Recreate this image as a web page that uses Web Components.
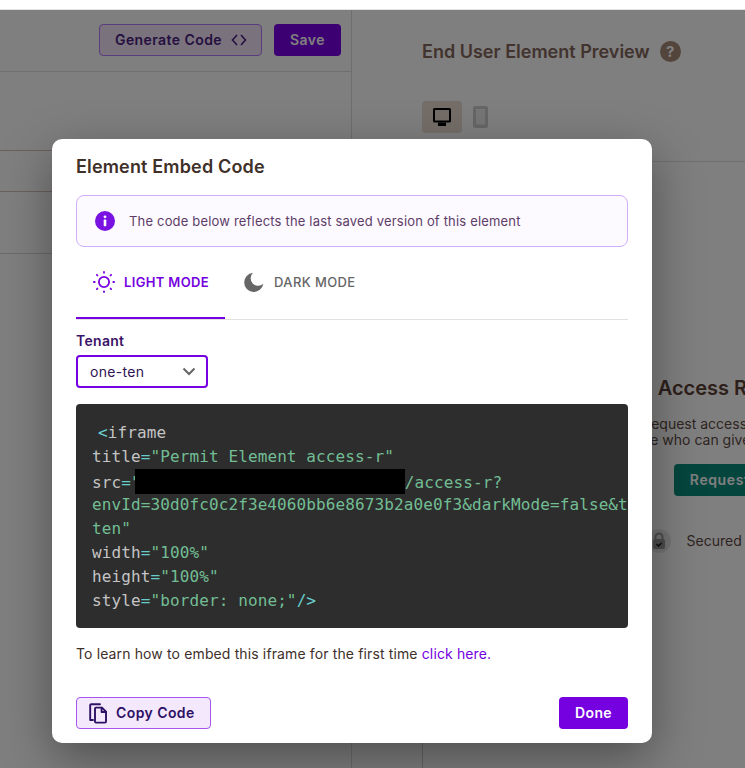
<!DOCTYPE html>
<html>
<head>
<meta charset="utf-8">
<title>Element Embed Code</title>
<style>
  html, body { margin: 0; height: 768px; overflow: hidden; background: #fff; }
  body { font-family: Inter, "Liberation Sans", sans-serif; }
</style>
</head>
<body>
<pm-app>
  <pm-editor-pane slot="left"></pm-editor-pane>
  <pm-preview-pane slot="right"></pm-preview-pane>
  <pm-modal slot="modal" heading="Element Embed Code">
    <pm-alert>The code below reflects the last saved version of this element</pm-alert>
    <pm-tabs></pm-tabs>
    <pm-select label="Tenant" value="one-ten"></pm-select>
    <pm-code></pm-code>
    <pm-note></pm-note>
    <pm-button slot="footer" kind="soft">
      <svg slot="icon" width="22" height="22" viewBox="0 0 22 22" fill="none" stroke="#2e1065" stroke-width="1.9" stroke-linejoin="round" stroke-linecap="round"><path d="M6 18H3.2V3.2a1 1 0 0 1 1-1H13"/><path d="M8 6.6a1 1 0 0 1 1-1h6l4 4v10a1 1 0 0 1-1 1H9a1 1 0 0 1-1-1z"/><path d="M14.6 5.8v4.2H19"/></svg>
      Copy Code
    </pm-button>
    <pm-button slot="footer" kind="primary">Done</pm-button>
  </pm-modal>
</pm-app>

<script>
class PmApp extends HTMLElement {
  constructor() {
    super();
    this.attachShadow({mode: 'open'}).innerHTML = `
      <style>
        :host { display: block; height: 768px; overflow: hidden; }
        .top { height: 10px; box-sizing: border-box; border-bottom: 1px solid #e4e4e4; }
        .stage { position: relative; display: flex; height: 758px; overflow: hidden; background: #fff; }
        .scrim {
          position: absolute;
          inset: 0;
          background: rgba(0, 0, 0, .5);
          padding: 129px 0 0 52px;
        }
      </style>
      <div class="top"></div>
      <div class="stage">
        <slot name="left"></slot>
        <slot name="right"></slot>
        <div class="scrim"><slot name="modal"></slot></div>
      </div>
    `;
  }
}

class PmEditorPane extends HTMLElement {
  constructor() {
    super();
    this.attachShadow({mode: 'open'}).innerHTML = `
      <style>
        :host { display: block; width: 352px; flex: none; box-sizing: border-box; border-right: 1px solid #dcdcdc; }
        .bar {
          display: flex;
          justify-content: flex-end;
          gap: 12px;
          height: 62px;
          box-sizing: border-box;
          padding: 14px 10px 0 0;
          border-bottom: 1px solid #dedede;
        }
        .btn {
          display: flex;
          align-items: center;
          justify-content: center;
          height: 32px;
          box-sizing: border-box;
          padding-bottom: 1px;
          border-radius: 4px;
          font-size: 14px;
          font-weight: 600;
          letter-spacing: .42px;
        }
        .gen { width: 163px; gap: 9px; padding-left: 1px; background: #f4e5fb; border: 1px solid #b67aff; color: #4c1f80; }
        .save { width: 67px; background: #7a00e6; color: #fff; }
        .row { box-sizing: border-box; }
        .r1 { height: 79px; border-bottom: 1px solid #dbbfbc; }
        .r2 { height: 41px; border-bottom: 1px solid #dbbfbc; }
        .r3 { height: 62px; border-bottom: 1px solid #d6d6d6; }
      </style>
      <div class="bar">
        <div class="btn gen">Generate Code
          <svg width="16" height="12" viewBox="0 0 16 12" fill="none" stroke="#4c1f80" stroke-width="1.6"><path d="M6 1 1.5 6 6 11"/><path d="M10 1l4.5 5L10 11"/></svg>
        </div>
        <div class="btn save">Save</div>
      </div>
      <div class="row r1"></div>
      <div class="row r2"></div>
      <div class="row r3"></div>
    `;
  }
}

class PmPreviewPane extends HTMLElement {
  constructor() {
    super();
    this.attachShadow({mode: 'open'}).innerHTML = `
      <style>
        :host { display: block; flex: 1; min-width: 0; box-sizing: border-box; overflow: hidden; padding-left: 70px; }
        .head {
          display: flex;
          align-items: center;
          gap: 10px;
          height: 20px;
          padding-top: 31px;
          font-size: 18px;
          font-weight: 600;
          color: #84665c;
          white-space: nowrap;
        }
        .q {
          display: flex;
          align-items: center;
          justify-content: center;
          width: 21px;
          height: 21px;
          border-radius: 50%;
          background: #a68a76;
          color: #fff;
          font-size: 15px;
          font-weight: 700;
        }
        .devices { display: flex; align-items: center; gap: 11px; padding-top: 40px; height: 32px; }
        .dev { display: flex; align-items: center; justify-content: center; width: 40px; height: 32px; border-radius: 4px; background: #eadcd0; }
        .phone { display: block; }
        .area {
          width: 626px;
          height: 700px;
          margin-top: 28px;
          box-sizing: border-box;
          border-top: 1px solid #dedede;
          border-left: 1px solid #cfcfcf;
          display: flex;
          flex-direction: column;
          align-items: center;
          padding-top: 214px;
          text-align: center;
          color: #5e4a44;
          font-size: 14px;
          line-height: 16px;
          white-space: nowrap;
        }
        h2 { margin: 0 0 16px; font-size: 20px; line-height: 24px; font-weight: 600; color: #5b4036; }
        .go {
          display: flex;
          align-items: center;
          height: 32px;
          padding: 0 16px;
          margin: 16px 0 0 26px;
          border-radius: 4px;
          background: #098c7d;
          color: #fff;
          font-size: 14px;
          font-weight: 600;
          letter-spacing: .6px;
        }
        .sec { display: flex; align-items: center; gap: 16px; margin-top: 33px; }
        .lock { display: flex; align-items: center; justify-content: center; width: 24px; height: 24px; border-radius: 50%; background: #e6e6e6; }
      </style>
      <div class="head">End User Element Preview <span class="q">?</span></div>
      <div class="devices">
        <div class="dev">
          <svg width="20" height="20" viewBox="0 0 20 20"><path fill="#000" fill-rule="evenodd" d="M2.5 1h15A1.5 1.5 0 0 1 19 2.500v11.500a1.500 1.500 0 0 1-1.500 1.500H2.500A1.500 1.500 0 0 1 1 14V2.500A1.500 1.500 0 0 1 2.500 1zM3 3v10.500h14V3z"/><path fill="#000" d="M6 15.500h8V19H6z"/></svg>
        </div>
        <svg class="phone" width="15" height="22" viewBox="0 0 15 22"><rect width="15" height="22" rx="2.500" fill="#cccccc"/><rect x="3" y="3" width="9" height="15.500" fill="#ededed"/></svg>
      </div>
      <div class="area">
        <h2>Access Request</h2>
        <div>Request access to this page</div>
        <div>someone who can give you access to this</div>
        <div class="go">Request Access</div>
        <div class="sec">
          <span class="lock"><svg width="14" height="18" viewBox="0 0 14 18"><path fill="none" stroke="#999" stroke-width="2" d="M3.500 8V5a3.500 3.500 0 0 1 7 0v3"/><rect x="1" y="7" width="12" height="10" rx="2" fill="#999"/><path fill="none" stroke="#111" stroke-width="1.300" d="M4.500 12l2 2 3-3"/></svg></span>
          Secured by Permit.io
        </div>
      </div>
    `;
  }
}

class PmModal extends HTMLElement {
  constructor() {
    super();
    this.attachShadow({mode: 'open'}).innerHTML = `
      <style>
        :host {
          display: block;
          width: 600px;
          height: 604px;
          box-sizing: border-box;
          padding: 14px 24px 14px;
          background: #fff;
          border-radius: 10px;
          box-shadow: 0 16px 50px rgba(0, 0, 0, .38);
        }
        h1 { margin: 0 0 14px; font-size: 18px; line-height: 28px; font-weight: 600; letter-spacing: .16px; color: #40302a; }
        footer { display: flex; justify-content: space-between; margin-top: 33px; }
      </style>
      <h1></h1>
      <slot></slot>
      <footer><slot name="footer"></slot></footer>
    `;
    this.shadowRoot.querySelector('h1').textContent = this.getAttribute('heading');
  }
}

class PmAlert extends HTMLElement {
  constructor() {
    super();
    this.attachShadow({mode: 'open'}).innerHTML = `
      <style>
        :host {
          display: flex;
          align-items: center;
          gap: 14px;
          height: 52px;
          box-sizing: border-box;
          padding: 0 0 1px 18px;
          border: 1px solid #d2aefb;
          border-radius: 8px;
          background: #fcfaff;
          color: #5e3c68;
          font-size: 13px;
          letter-spacing: .18px;
        }
      </style>
      <svg width="20" height="20" viewBox="0 0 20 20"><circle cx="10" cy="10" r="10" fill="#7a12e2"/><circle cx="10" cy="5.800" r="1.400" fill="#fff"/><rect x="8.700" y="8.600" width="2.600" height="6.600" rx=".6" fill="#fff"/></svg>
      <span><slot></slot></span>
    `;
  }
}

class PmTabs extends HTMLElement {
  constructor() {
    super();
    const rays = [0, 45, 90, 135, 180, 225, 270, 315].map(a =>
      `<rect x="10.100" y="0" width="1.800" height="2.600" rx=".9" transform="rotate(${a} 11 11)" fill="#7500e0"/>`).join('');
    this.attachShadow({mode: 'open'}).innerHTML = `
      <style>
        :host {
          display: flex;
          height: 73px;
          box-sizing: border-box;
          border-bottom: 1px solid #e2e0e0;
        }
        .tab {
          display: flex;
          align-items: center;
          height: 72px;
          box-sizing: border-box;
          padding-bottom: 3px;
          font-size: 13px;
          font-weight: 500;
          letter-spacing: .4px;
          color: #666;
        }
        .on {
          width: 149px;
          padding-left: 17px;
          padding-bottom: 0;
          gap: 9px;
          color: #7500e0;
          font-weight: 600;
          letter-spacing: .35px;
          border-bottom: 2px solid #7500e0;
        }
        .off { padding-left: 18px; gap: 10px; }
        .off svg { margin-top: 2px; }
      </style>
      <div class="tab on">
        <svg width="22" height="22" viewBox="0 0 22 22"><circle cx="11" cy="11" r="5.100" fill="none" stroke="#7500e0" stroke-width="1.800"/>${rays}</svg>
        LIGHT MODE
      </div>
      <div class="tab off">
        <svg width="21" height="21" viewBox="0 0 21 21"><path fill="#666" d="M10 .8a9.600 9.600 0 1 0 10.300 10.900A7.200 7.200 0 0 1 10 .8z"/></svg>
        DARK MODE
      </div>
    `;
  }
}

class PmSelect extends HTMLElement {
  constructor() {
    super();
    this.attachShadow({mode: 'open'}).innerHTML = `
      <style>
        :host { display: block; padding-top: 12px; }
        label { display: block; font-size: 14px; line-height: 17px; font-weight: 600; letter-spacing: .3px; color: #3a1468; margin-bottom: 6px; }
        .box {
          display: flex;
          align-items: center;
          justify-content: space-between;
          width: 132px;
          height: 33px;
          box-sizing: border-box;
          padding: 0 10px 0 12px;
          border: 2px solid #7500e0;
          border-radius: 4px;
          font-size: 14px;
          letter-spacing: .3px;
          color: #2f1454;
        }
      </style>
      <label></label>
      <div class="box"><span></span>
        <svg width="14" height="9" viewBox="0 0 14 9" fill="none" stroke="#666" stroke-width="2"><path d="M1.500 1.500 7 7l5.500-5.500"/></svg>
      </div>
    `;
    this.shadowRoot.querySelector('label').textContent = this.getAttribute('label');
    this.shadowRoot.querySelector('span').textContent = this.getAttribute('value');
  }
}

class PmCode extends HTMLElement {
  constructor() {
    super();
    this.attachShadow({mode: 'open'}).innerHTML = `
      <style>
        :host {
          display: block;
          margin-top: 16px;
          height: 224px;
          box-sizing: border-box;
          padding: 17px 16px 0;
          border-radius: 4px;
          background: #2d2d2d;
          color: #c4c4c4;
          font: 16px/24px "DejaVu Sans Mono", monospace;
          letter-spacing: .11px;
          overflow: hidden;
        }
        div { height: 24px; white-space: pre; }
        i { font-style: normal; color: #72bd94; }
        b { font-weight: normal; color: #67cdcc; }
        .tag { padding-left: 6px; }
        .mask { display: inline-block; width: 270px; height: 25px; margin-left: -6px; background: #000; vertical-align: -6px; }
      </style>
      <div class="tag"><b>&lt;</b>iframe</div>
      <div>title<b>=</b><i>"Permit Element access-r"</i></div>
      <div>src<b>=</b><i>"</i><span class="mask"></span><i>/access-r?</i></div>
      <div><i>envId=30d0fc0c2f3e4060bb6e8673b2a0e0f3&amp;darkMode=false&amp;t</i></div>
      <div><i>ten"</i></div>
      <div>width<b>=</b><i>"100%"</i></div>
      <div>height<b>=</b><i>"100%"</i></div>
      <div>style<b>=</b><i>"border: none;"</i><b>/&gt;</b></div>
    `;
  }
}

class PmNote extends HTMLElement {
  constructor() {
    super();
    this.attachShadow({mode: 'open'}).innerHTML = `
      <style>
        :host { display: block; margin-top: 16px; font-size: 14px; line-height: 20px; color: #40302a; letter-spacing: .13px; }
        a { color: #7500e0; text-decoration: none; }
      </style>
      To learn how to embed this iframe for the first time <a href="#">click here.</a>
    `;
  }
}

class PmButton extends HTMLElement {
  constructor() {
    super();
    this.attachShadow({mode: 'open'}).innerHTML = `
      <style>
        :host {
          display: inline-flex;
          align-items: center;
          height: 32px;
          box-sizing: border-box;
          padding-bottom: 1px;
          border-radius: 4px;
          font-size: 14px;
          font-weight: 600;
          letter-spacing: .42px;
        }
        :host([kind=soft]) { width: 135px; padding-left: 10px; gap: 7px; background: #f4e8fd; border: 1px solid #a855f0; color: #2e1065; }
        :host([kind=primary]) { width: 69px; justify-content: center; background: #7500e0; color: #fff; }
      </style>
      <slot name="icon"></slot><span><slot></slot></span>
    `;
  }
}

customElements.define('pm-app', PmApp);
customElements.define('pm-editor-pane', PmEditorPane);
customElements.define('pm-preview-pane', PmPreviewPane);
customElements.define('pm-modal', PmModal);
customElements.define('pm-alert', PmAlert);
customElements.define('pm-tabs', PmTabs);
customElements.define('pm-select', PmSelect);
customElements.define('pm-code', PmCode);
customElements.define('pm-note', PmNote);
customElements.define('pm-button', PmButton);
</script>
</body>
</html>
